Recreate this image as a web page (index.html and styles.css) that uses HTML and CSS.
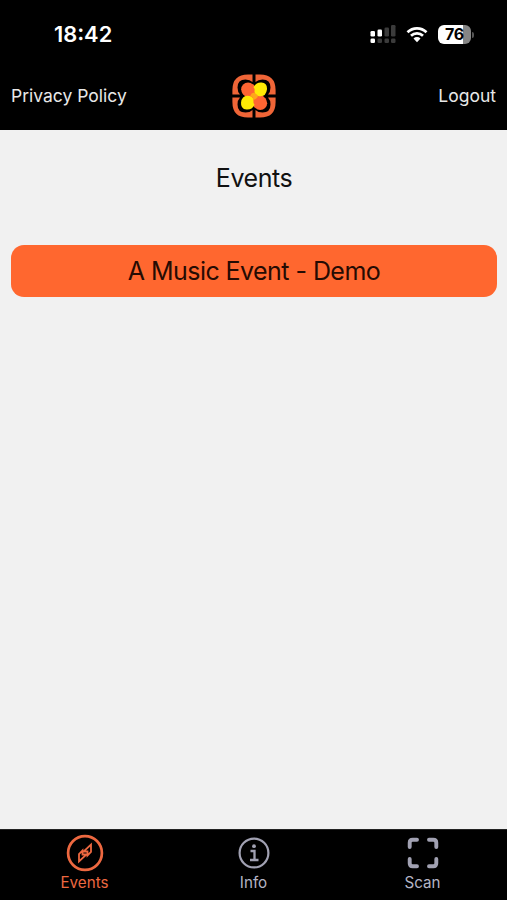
FILE: index.html
```html
<!DOCTYPE html>
<html lang="en">
<head>
<meta charset="utf-8">
<meta name="viewport" content="width=device-width, initial-scale=1">
<title>Events</title>
<link rel="stylesheet" href="styles.css">
</head>
<body>
<div class="app">
  <div class="status">
    <span class="time">18:42</span>
    <div class="indicators">
      <svg class="signal" viewBox="0 0 26 20" width="26" height="20">
        <g fill="#fff"><rect x="0.5" y="6" width="4.5" height="5.5" rx="1.3"/><rect x="7.5" y="4.5" width="4.5" height="7" rx="1.3"/><rect x="0.5" y="13.5" width="4.5" height="4.5" rx="1.3"/></g>
        <g fill="#3b3b3b"><rect x="14.5" y="2.5" width="4.5" height="9" rx="1.3"/><rect x="21" y="0" width="4.5" height="11.5" rx="1.3"/><rect x="7.5" y="13.5" width="4.5" height="4.5" rx="1.3"/><rect x="14.5" y="13.5" width="4.5" height="4.5" rx="1.3"/><rect x="21" y="13.5" width="4.5" height="4.5" rx="1.3"/></g>
      </svg>
      <svg class="wifi" viewBox="0 0 22 17" width="22" height="17">
        <path d="M1.5 6.2A13.5 13.5 0 0 1 20.5 6.2M5 9.8A8.6 8.6 0 0 1 17 9.8" fill="none" stroke="#fff" stroke-width="2.7"/>
        <path d="M7.5 12.4A5 5 0 0 1 14.5 12.4L11 16.2Z" fill="#fff"/>
      </svg>
      <div class="battery"><span class="level">76</span></div>
      <span class="battery-cap"></span>
    </div>
  </div>
  <header class="header">
    <a class="link">Privacy Policy</a>
    <svg class="logo" viewBox="0 0 44 44" width="44" height="44">
      <g fill="#ef6537">
        <path id="corner" d="M20.500 .4V8Q18 5.500 13.500 5.500Q5.500 5.500 5.500 13.500Q5.500 18 8 20.500H.4V16Q.4 .4 16 .4Z"/>
        <use href="#corner" transform="rotate(90 22 22)"/>
        <use href="#corner" transform="rotate(180 22 22)"/>
        <use href="#corner" transform="rotate(270 22 22)"/>
      </g>
      <g transform="translate(22 22) scale(1.080) translate(-22 -22)">
        <g fill="#ff6532"><circle cx="16.500" cy="15.800" r="6.400"/><circle cx="27.800" cy="28.600" r="6.400"/><path d="M11 19 21 11 33 25 23 33Z"/></g>
        <g fill="#ffe905"><path d="M21.500 14Q24 9 29 9.500Q34.500 10 34 16Q33 23.500 26 22Q22 21 22.500 17Q23 15.500 21.500 14Z"/><path d="M22.500 30Q20 35 15 34.500Q9.500 34 10 28Q11 20.500 18 22Q22 23 21.500 27Q21 28.500 22.500 30Z"/></g>
        <path d="M18.500 22Q20 18 23 19.500Q26 21 25.500 23Q23 26 21 25.500Q22 23 18.500 22Z" fill="#ffa51b"/>
      </g>
    </svg>
    <a class="link logout">Logout</a>
  </header>
  <main class="content">
    <h1 class="title">Events</h1>
    <button class="event">A Music Event - Demo</button>
  </main>
  <nav class="tabs">
    <a class="tab active">
      <svg viewBox="0 0 38 38" width="38" height="38" fill="none" stroke="currentColor">
        <circle cx="19" cy="19" r="16.900" stroke-width="2.700"/>
        <path d="M25 10.500V18L21.500 21.500V17.500H17.500ZM13 27.500V20L16.500 16.500V20.500H20.500Z" stroke-width="1.800"/>
      </svg>
      <span>Events</span>
    </a>
    <a class="tab">
      <svg viewBox="0 0 38 38" width="38" height="38" fill="none" stroke="currentColor">
        <circle cx="19" cy="19" r="14.400" stroke-width="2.200"/>
        <circle cx="19" cy="12.200" r="1.900" fill="currentColor" stroke="none"/>
        <path d="M15.500 17H19.500V26M15 26H23.500" stroke-width="2.300"/>
      </svg>
      <span>Info</span>
    </a>
    <a class="tab">
      <svg viewBox="0 0 38 38" width="38" height="38" fill="none" stroke="currentColor" stroke-width="3.900" stroke-linecap="round">
        <path d="M13 5.700H8.700Q5.700 5.700 5.700 8.700V13M25 5.700H29.300Q32.300 5.700 32.300 8.700V13M5.700 25V29.300Q5.700 32.300 8.700 32.300H13M32.300 25V29.300Q32.300 32.300 29.300 32.300H25"/>
      </svg>
      <span>Scan</span>
    </a>
  </nav>
</div>
</body>
</html>
```
FILE: styles.css
```css
* { box-sizing: border-box; }
body { margin: 0; background: #f1f1f1; font-family: Inter, "Liberation Sans", sans-serif; }
.app { height: 900px; display: flex; flex-direction: column; }
.status { height: 68px; flex: none; background: #000; color: #fff; display: flex; justify-content: space-between; padding: 0 33px 0 54px; }
.time { font-size: 21.8px; font-weight: 600; line-height: 69px; }
.indicators { display: flex; align-items: center; height: 69px; }
.wifi { margin-left: 10px; }
.battery { margin-left: 10px; width: 33px; height: 19px; border-radius: 6px; background: linear-gradient(90deg, #fff 76%, #858585 76%); }
.level { display: block; color: #000; font-size: 16px; font-weight: 700; line-height: 19px; text-align: center; letter-spacing: -0.3px; }
.battery-cap { width: 2px; height: 6px; margin-left: 1px; border-radius: 0 3px 3px 0; background: #555; }
.header { height: 62px; flex: none; background: #000; display: grid; grid-template-columns: 1fr 44px 1fr; align-items: center; padding: 0 11px 6px; }
.link { color: #e8e8e8; font-size: 17.5px; line-height: 22px; white-space: nowrap; }
.logout { text-align: right; }
.content { flex: 1; padding: 32px 10px 0 11px; display: flex; flex-direction: column; }
.title { margin: 0 0 51px; font-size: 25px; font-weight: 400; line-height: 32px; text-align: center; color: #111; letter-spacing: -0.45px; }
.event { height: 52px; border: 0; border-radius: 13px; background: #ff672f; color: #260b03; font: inherit; font-size: 25px; letter-spacing: -0.55px; padding: 0; }
.tabs { height: 71px; flex: none; background: #000; border-top: 1px solid #222; display: grid; grid-template-columns: repeat(3, 1fr); padding-top: 4px; }
.tab { display: flex; flex-direction: column; align-items: center; color: #a1a1b2; font-size: 15.2px; line-height: 20px; }
.tab span { color: #b4b4c4; margin-top: 1px; }
.active, .tab.active span { color: #ed6840; }
```
